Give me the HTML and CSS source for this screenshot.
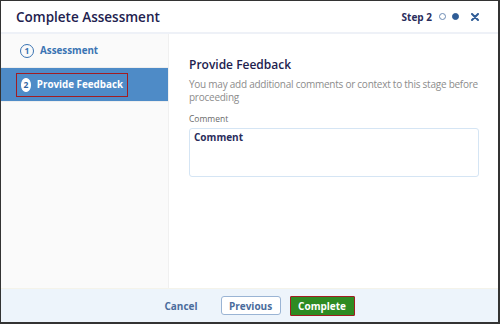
FILE: index.html
```html
<!DOCTYPE html>
<html lang="en">
<head>
    <meta charset="UTF-8">
    <meta name="viewport" content="width=device-width, initial-scale=1.0">
    <title>Complete Assessment</title>
    <link rel="stylesheet" href="styles.css">
</head>
<body>
    <div class="modal">
        <div class="modal-header">
            <h1>Complete Assessment</h1>
            <div class="steps">
                <span class="step-label">Step 2</span>
                <span class="dot"></span>
                <span class="dot filled"></span>
                <span class="close">
                    <svg width="8" height="8" viewBox="0 0 8 8">
                        <path d="M1 1 L7 7 M7 1 L1 7" stroke="#2f5c96" stroke-width="2" stroke-linecap="round"/>
                    </svg>
                </span>
            </div>
        </div>

        <div class="modal-body">
            <div class="sidebar">
                <div class="side-item">
                    <span class="num">1</span>
                    <span>Assessment</span>
                </div>
                <div class="side-item active">
                    <div class="highlight">
                        <span class="num">2</span>
                        <span>Provide Feedback</span>
                    </div>
                </div>
            </div>

            <div class="content">
                <h2>Provide Feedback</h2>
                <p class="desc">You may add additional comments or context to this stage before proceeding</p>
                <label class="field-label">Comment</label>
                <div class="comment-box">Comment</div>
            </div>
        </div>

        <div class="modal-footer">
            <button class="btn-link">Cancel</button>
            <button class="btn-outline">Previous</button>
            <button class="btn-primary">Complete</button>
        </div>
    </div>
</body>
</html>
```

FILE: styles.css
```css
html, body {
    margin: 0;
    padding: 0;
}

body {
    font-family: 'Open Sans', 'Liberation Sans', sans-serif;
    background: #ffffff;
}

.modal {
    width: 500px;
    height: 324px;
    box-sizing: border-box;
    border: 1px solid #333333;
    border-right-width: 2px;
    border-bottom-width: 2px;
    display: flex;
    flex-direction: column;
    background: #ffffff;
}

/* header */
.modal-header {
    height: 31px;
    border-bottom: 2px solid #eef1f7;
    display: flex;
    align-items: center;
    justify-content: space-between;
    padding: 0 19px 0 15px;
}

.modal-header h1 {
    margin: 0;
    font-size: 13.5px;
    font-weight: 600;
    color: #22214e;
}

.steps {
    display: flex;
    align-items: center;
}

.step-label {
    font-size: 10px;
    font-weight: 700;
    color: #2a2d5c;
    margin-right: 7px;
}

.dot {
    width: 5px;
    height: 5px;
    border-radius: 50%;
    border: 1px solid #6b8ab3;
    margin-right: 6px;
}

.dot.filled {
    background: #2f5c96;
    border-color: #2f5c96;
}

.close {
    display: flex;
    margin-left: 6px;
}

/* body */
.modal-body {
    flex: 1;
    display: flex;
}

.sidebar {
    width: 167px;
    background: #fafafa;
    border-right: 1px solid #f0f0f0;
}

.side-item {
    height: 33px;
    display: flex;
    align-items: center;
    padding-left: 19px;
    font-size: 9.8px;
    font-weight: 700;
    color: #3a74b3;
    border-bottom: 1px solid #eeeeee;
    white-space: nowrap;
}

.side-item .num {
    width: 12px;
    height: 12px;
    border: 1.5px solid #3a74b3;
    border-radius: 50%;
    display: flex;
    align-items: center;
    justify-content: center;
    font-size: 8.5px;
    margin-right: 6px;
}

.side-item.active {
    background: #4e8bc7;
    color: #ffffff;
    padding-left: 15px;
}

.highlight {
    display: flex;
    align-items: center;
    border: 1.5px solid #a11d22;
    padding: 3px 4px;
    width: 102px;
    height: 16px;
}

.side-item.active .num {
    background: #ffffff;
    border-color: #ffffff;
    color: #2f63a0;
}

.content {
    flex: 1;
    padding: 22px 8px 0 20px;
}

.content h2 {
    margin: 0 0 5px 0;
    font-size: 12px;
    font-weight: 600;
    color: #22214e;
}

.desc {
    margin: 0 0 9px 0;
    font-size: 10px;
    letter-spacing: -0.25px;
    line-height: 13px;
    color: #8c8c8c;
}

.field-label {
    display: block;
    font-size: 8.5px;
    line-height: 12px;
    color: #6a6a6a;
    margin-bottom: 3px;
}

.comment-box {
    height: 44px;
    margin-right: 11px;
    border: 1px solid #d5e5f4;
    border-radius: 3px;
    padding: 1px 4px 2px 4px;
    font-size: 10px;
    font-weight: 700;
    color: #2a2d5c;
}

/* footer */
.modal-footer {
    height: 33px;
    border-top: 1px solid #f4f3ea;
    background: #edf4fb;
    display: flex;
    align-items: center;
    justify-content: center;
    padding-left: 20px;
}

.modal-footer button {
    font-family: 'Open Sans', 'Liberation Sans', sans-serif;
    font-size: 10px;
    font-weight: 700;
    cursor: pointer;
}

.btn-link {
    background: none;
    border: none;
    color: #4a6c9c;
    padding: 0;
    margin-right: 23px;
}

.btn-outline {
    width: 60px;
    height: 19px;
    background: #ffffff;
    border: 1.5px solid #9ab4d4;
    border-radius: 3px;
    color: #4a6c9c;
    margin-right: 9px;
}

.btn-primary {
    width: 65px;
    height: 20px;
    background: #2e8b22;
    border: 1.5px solid #a11d22;
    border-radius: 1px;
    color: #ffffff;
}
```
